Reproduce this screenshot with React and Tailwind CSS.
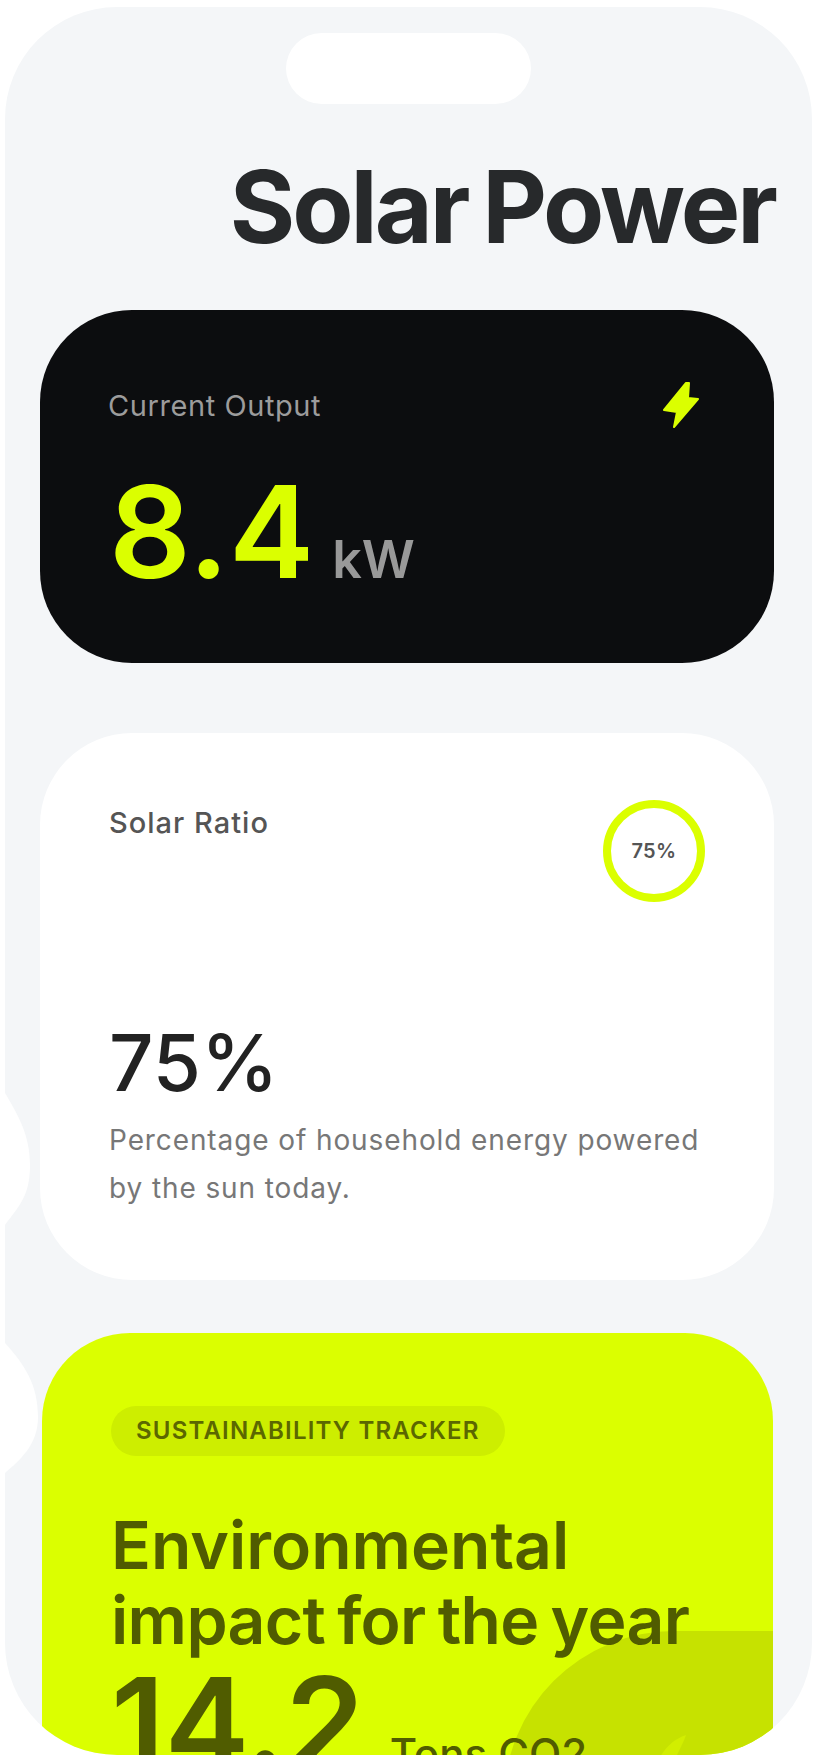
const LIME = 'bg-[#dbff00]';

function Bolt() {
  return (
    <svg width="36" height="46" viewBox="0 0 36 46" className="mt-[-4px]">
      <path
        d="M23 1 L26 1 L25 16 L35 17 L11 45 L14 30 L1 28 Z"
        fill="#dbff00"
        stroke="#dbff00"
        strokeWidth="2"
        strokeLinejoin="round"
      />
    </svg>
  );
}

function OutputCard() {
  return (
    <section className="ml-[35px] mr-[38px] h-[353px] rounded-[92px] bg-[#0c0d0f] pl-[68px] pr-[75px] pt-[76px]">
      <div className="flex items-start justify-between">
        <span className="mt-[2px] text-[29px] leading-[36px] tracking-[0.02em] text-[#9c9c9c]">Current Output</span>
        <Bolt />
      </div>
      <div className="mt-[24px] flex items-baseline">
        <span className="ml-[1px] text-[128px] leading-[160px] font-semibold text-[#dbff00]">8.4</span>
        <span className="ml-[18px] text-[52px] font-semibold text-[#999999]">kW</span>
      </div>
    </section>
  );
}

function RatioCard() {
  return (
    <section className="ml-[35px] mr-[38px] mt-[70px] h-[547px] rounded-[92px] bg-white pl-[69px] pr-[69px] pt-[67px]">
      <div className="flex items-start justify-between">
        <span className="mt-[5px] text-[29px] leading-[36px] font-medium tracking-[0.035em] text-[#555555]">Solar Ratio</span>
        <div className="flex h-[102px] w-[102px] items-center justify-center rounded-full border-[8px] border-[#dbff00] text-[20px] font-semibold tracking-[0.02em] text-[#555555]">
          75%
        </div>
      </div>
      <div className="mt-[113px] text-[78px] leading-[96px] font-medium text-[#222222]">75%</div>
      <p className="mt-[5px] text-[28px] leading-[48px] tracking-[0.032em] text-[#777777]">
        Percentage of household energy powered
        <br />
        by the sun today.
      </p>
    </section>
  );
}

function TrackerCard() {
  return (
    <section className={`relative ml-[37px] mr-[39px] mt-[53px] h-[500px] overflow-hidden rounded-[88px] ${LIME} pl-[69px] pt-[73px]`}>
      {/* darker corner shape with a small leaf tip */}
      <div className="absolute bottom-0 left-[462px] right-0 top-[298px] rounded-tl-[170px] bg-[#c6e200]" />
      <svg width="30" height="22" viewBox="0 0 30 22" className="absolute left-[618px] top-[402px]">
        <path d="M26 0 C14 4 6 12 0 22 L16 22 C20 14 24 6 26 0 Z" fill="#d2ee00" />
      </svg>
      <div className="relative">
        <span className="inline-block h-[50px] rounded-full bg-[#cdee00] px-[25px] text-[24px] leading-[50px] font-semibold tracking-[0.05em] text-[#5b6700]">
          SUSTAINABILITY TRACKER
        </span>
        <h2 className="mt-[52px] text-[66px] leading-[75px] font-[560] text-[#505c00]">
          Environmental
          <br />
          <span className="tracking-[-0.01em] [word-spacing:-4px]">impact for the year</span>
        </h2>
        <div className="mt-[-10px] flex items-baseline">
          <span className="text-[127px] leading-[150px] font-semibold text-[#505c00]">14.2</span>
          <span className="ml-[25px] text-[42px] font-medium text-[#505c00]">Tons CO2</span>
        </div>
      </div>
    </section>
  );
}

export default function App() {
  return (
    <div
      className="relative h-[1760px] w-[817px] overflow-hidden bg-white"
      style={{ fontFamily: 'Inter, "Noto Sans", sans-serif' }}
    >
      <div className="ml-[5px] mt-[7px] h-[1748px] w-[807px] overflow-hidden rounded-[112px] bg-[#f4f6f8]">
        <div className="mx-auto mt-[26px] h-[71px] w-[245px] rounded-[36px] bg-white" />
        <h1 className="mt-[45px] pr-[37px] text-right text-[100px] leading-[116px] font-bold tracking-[-0.03em] [word-spacing:-6px] text-[#27292b]">
          Solar Power
        </h1>
        <div className="mt-[45px]">
          <OutputCard />
          <RatioCard />
          <TrackerCard />
        </div>
      </div>
      {/* side button cut-outs on the left edge of the shell */}
      <svg width="40" height="400" viewBox="0 0 40 400" className="absolute left-0 top-[1080px]">
        <path d="M0 10 L5 13 C18 35 30 55 30 85 C30 115 20 125 5 145 L0 145 Z" fill="#ffffff" />
        <path d="M0 263 L5 263 C25 285 38 305 38 337 C38 365 20 380 5 393 L0 393 Z" fill="#ffffff" />
      </svg>
    </div>
  );
}
